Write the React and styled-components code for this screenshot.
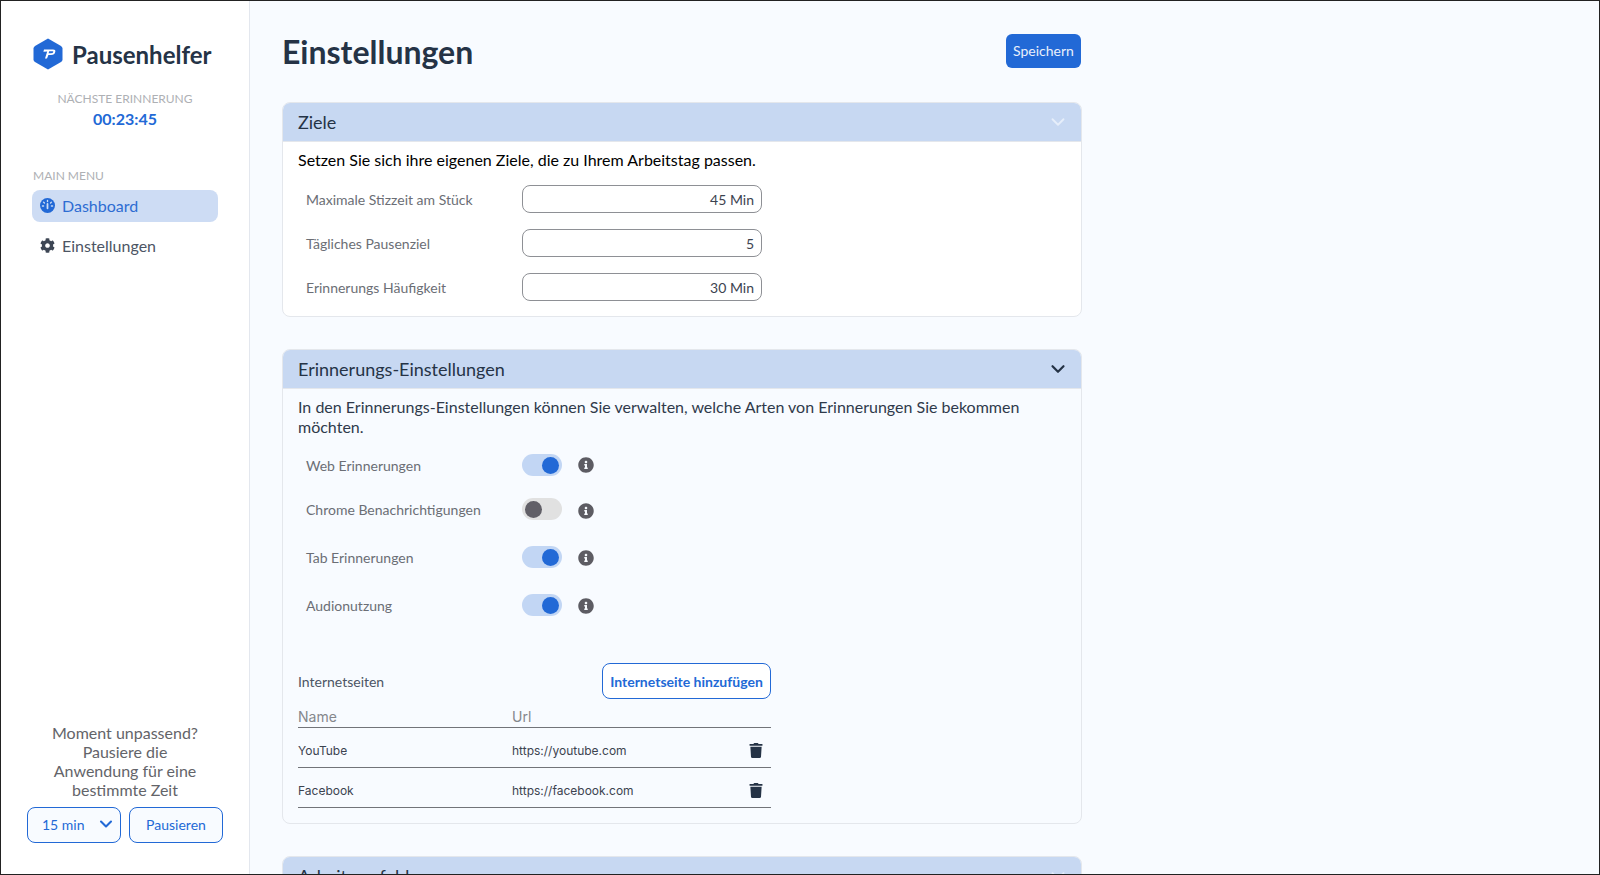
import React from 'react';
import styled, { createGlobalStyle } from 'styled-components';
import { FaCog, FaInfoCircle, FaTrash } from 'react-icons/fa';
import { ChevronDown } from 'lucide-react';

const GlobalStyle = createGlobalStyle`
    * { box-sizing: border-box; }
    html, body { margin: 0; padding: 0; height: 875px; overflow: hidden; }
    body { font-family: "Lato", "Liberation Sans", sans-serif; background: #f8fbff; }
`

const Page = styled.div`
    width: 1600px;
    height: 875px;
    border: 1px solid #222;
    display: flex;
    overflow: hidden;
    background-color: #f8fbff;
`

const Sidebar = styled.aside`
    width: 249px;
    flex-shrink: 0;
    background-color: #fff;
    border-right: 1px solid #e3e7ee;
    display: flex;
    flex-direction: column;
    justify-content: space-between;
    padding: 37px 0 31px;
`

const Logo = styled.div`
    display: flex;
    align-items: center;
    gap: 9px;
    padding-left: 32px;
    color: #253346;
    font-size: 24px;
    font-weight: 700;
`

const LogoMark = styled.svg`
    width: 30px;
    height: 32px;
`

const Reminder = styled.div`
    margin-top: 21px;
    width: 248px;
    text-align: center;
`

const ReminderLabel = styled.div`
    font-size: 12px;
    line-height: 16px;
    color: #aeb0b4;
`

const ReminderTime = styled.div`
    font-size: 16px;
    font-weight: 700;
    line-height: 22px;
    margin-top: 1px;
    color: #2269d6;
`

const MenuTitle = styled.div`
    margin: 38px 0 0 32px;
    font-size: 12px;
    line-height: 16px;
    color: #aeb0b4;
`

const Menu = styled.nav`
    margin: 6px 31px 0;
    display: flex;
    flex-direction: column;
    gap: 8px;
`

const MenuItem = styled.a`
    height: 32px;
    padding: 0 0 1px 8px;
    display: flex;
    align-items: center;
    gap: 7px;
    border-radius: 8px;
    font-size: 16px;
    color: ${p => p.$active ? '#2d6cd2' : '#4c5564'};
    background-color: ${p => p.$active ? '#cddcf4' : 'transparent'};
    svg { width: 15px; height: 15px; color: ${p => p.$active ? '#2269d6' : '#3d4654'}; }
`

const PauseBox = styled.div`
    padding: 0 26px;
    text-align: center;
`

const PauseText = styled.p`
    margin: 0 auto 8px;
    width: 170px;
    font-size: 16px;
    line-height: 19px;
    color: #636469;
`

const PauseControls = styled.div`
    display: flex;
    gap: 8px;
`

const OutlineButton = styled.button`
    width: 94px;
    height: 36px;
    border: 1px solid #2269d6;
    border-radius: 8px;
    background-color: #f8fbff;
    color: #2269d6;
    font-family: inherit;
    font-size: 14px;
    padding: 0 0 2px;
`

const PauseSelect = styled(OutlineButton)`
    display: flex;
    align-items: center;
    justify-content: space-between;
    padding: 0 4px 2px 14px;
    svg { width: 20px; height: 20px; stroke-width: 2.5; }
`

const Main = styled.main`
    flex: 1;
    padding: 33px 0 0 32px;
`

const Content = styled.div`
    width: 800px;
`

const TopBar = styled.header`
    height: 35px;
    margin-bottom: 33px;
    display: flex;
    align-items: center;
    justify-content: space-between;
`

const Title = styled.h1`
    margin: 0;
    font-size: 32px;
    font-weight: 700;
    color: #253346;
`

const SaveButton = styled.button`
    width: 75px;
    height: 34px;
    margin: 0 1px 2px 0;
    border: none;
    border-radius: 6px;
    background-color: #2269d6;
    color: #e9f0fb;
    font-family: inherit;
    font-size: 14px;
    padding: 0;
`

const Card = styled.section`
    background-color: ${p => p.$white ? '#fff' : '#f8fbff'};
    border: 1px solid #e4e7ec;
    border-radius: 8px;
    margin-bottom: 32px;
    overflow: hidden;
`

const CardHeader = styled.div`
    height: 39px;
    padding: 0 12px 0 15px;
    display: flex;
    align-items: center;
    justify-content: space-between;
    background-color: #c7d8f2;
    border-bottom: 1px solid #e4e7ec;
    font-size: 18px;
    color: #253346;
    svg {
        width: 22px;
        height: 22px;
        stroke-width: ${p => p.$pale ? 2 : 2.4};
        color: ${p => p.$pale ? '#e6eefa' : '#253346'};
    }
`

const CardBody = styled.div`
    padding: 8px 15px 15px;
`

const Intro = styled.p`
    margin: 0 0 ${p => p.$gap}px;
    font-size: 16px;
    line-height: 20px;
    color: ${p => p.$dark ? '#000' : '#2f3a4b'};
`

const FieldRow = styled.div`
    height: 28px;
    margin: 0 0 16px 8px;
    display: grid;
    grid-template-columns: 216px 240px;
    align-items: center;
    font-size: 14px;
    color: #6b6e75;
    &:last-child { margin-bottom: 0; }
`

const FieldValue = styled.div`
    height: 28px;
    padding: 0 7px;
    display: flex;
    align-items: center;
    justify-content: flex-end;
    border: 1px solid #8e9095;
    border-radius: 8px;
    background-color: #fff;
    color: #3c4350;
    font-size: 14px;
`

const ToggleRow = styled.div`
    height: 22px;
    margin: 0 0 ${p => p.$gap}px 8px;
    display: grid;
    grid-template-columns: 216px 40px 40px;
    align-items: center;
    font-size: 14px;
    color: #6b6e75;
`

const Toggle = styled.span`
    width: 40px;
    height: 22px;
    padding: 0 3px;
    display: flex;
    align-items: center;
    justify-content: ${p => p.$on ? 'flex-end' : 'flex-start'};
    border-radius: 11px;
    background-color: ${p => p.$on ? '#c2d6f4' : '#e1e1e1'};
    &::after {
        content: '';
        width: 17px;
        height: 17px;
        border-radius: 50%;
        background-color: ${p => p.$on ? '#2269d6' : '#615f67'};
    }
`

const InfoIcon = styled(FaInfoCircle)`
    width: 16px;
    height: 16px;
    margin: ${p => p.$drop}px 0 0 16px;
    color: #5d5c63;
`

const SitesHead = styled.div`
    width: 473px;
    margin-top: 47px;
    display: flex;
    align-items: center;
    justify-content: space-between;
    font-size: 14px;
    color: #4c5564;
`

const AddButton = styled.button`
    width: 169px;
    height: 36px;
    border: 1px solid #2269d6;
    border-radius: 8px;
    background-color: #fff;
    color: #2269d6;
    font-family: inherit;
    font-size: 14px;
    font-weight: 700;
    padding: 0;
`

const SitesTable = styled.div`
    width: 473px;
    margin-top: 7px;
`

const SiteRow = styled.div`
    height: ${p => p.$head ? 22 : 40}px;
    padding: ${p => p.$head ? '0 7px 0 0' : '6px 7px 0 0'};
    display: grid;
    grid-template-columns: 214px 1fr 16px;
    align-items: center;
    border-bottom: 1px solid #727479;
    font-family: "Inter", sans-serif;
    font-size: ${p => p.$head ? 14 : 12}px;
    color: ${p => p.$head ? '#85878c' : '#3c4350'};
    svg { width: 14px; height: 15px; color: #253346; justify-self: center; }
`

const goals = [
    { label: 'Maximale Stizzeit am Stück', value: '45 Min' },
    { label: 'Tägliches Pausenziel', value: '5' },
    { label: 'Erinnerungs Häufigkeit', value: '30 Min' },
]

const toggles = [
    { label: 'Web Erinnerungen', on: true, gap: 22, drop: 0 },
    { label: 'Chrome Benachrichtigungen', on: false, gap: 26, drop: 3 },
    { label: 'Tab Erinnerungen', on: true, gap: 26, drop: 2 },
    { label: 'Audionutzung', on: true, gap: 0, drop: 2 },
]

const sites = [
    { name: 'YouTube', url: 'https://youtube.com' },
    { name: 'Facebook', url: 'https://facebook.com' },
]

function DashboardIcon() {
    return (
        <svg viewBox="0 0 16 16">
            <circle cx="8" cy="8" r="8" fill="currentColor" />
            <g stroke="#cddcf4" strokeWidth="1.5" strokeLinecap="round">
                <path d="M8 2.6v1.2M3.8 4.4l.9.9M12.2 4.4l-.9.9M2.6 8.6h1.2M13.4 8.6h-1.2" />
                <path d="M8 11V6.4" strokeWidth="1.9" />
            </g>
        </svg>
    )
}

export default function App() {
    return (
        <>
            <GlobalStyle />
            <Page>
                <Sidebar>
                    <div>
                        <Logo>
                            <LogoMark viewBox="0 0 30 32">
                                <path d="M15 0.5 L28 8 Q29.5 9 29.5 10.5 L29.5 21.5 Q29.5 23 28 24 L15 31.5 L2 24 Q0.5 23 0.5 21.5 L0.5 10.5 Q0.5 9 2 8 Z" fill="#2269d6" />
                                <path fillRule="evenodd" d="M11 11.5 L20 11.5 Q22.8 11.5 22.3 13.8 Q21.7 17 18 17 L15.4 17 L14 20.5 L12 20.5 L14.2 13.4 L10.4 13.8 Z M16.2 13.3 L15.6 15.3 L17.8 15.3 Q20 15.3 20.3 14 Q20.5 13.3 19.6 13.3 Z" fill="#fff" />
                            </LogoMark>
                            Pausenhelfer
                        </Logo>
                        <Reminder>
                            <ReminderLabel>NÄCHSTE ERINNERUNG</ReminderLabel>
                            <ReminderTime>00:23:45</ReminderTime>
                        </Reminder>
                        <MenuTitle>MAIN MENU</MenuTitle>
                        <Menu>
                            <MenuItem $active><DashboardIcon />Dashboard</MenuItem>
                            <MenuItem><FaCog />Einstellungen</MenuItem>
                        </Menu>
                    </div>
                    <PauseBox>
                        <PauseText>Moment unpassend? Pausiere die Anwendung für eine bestimmte Zeit</PauseText>
                        <PauseControls>
                            <PauseSelect>15 min<ChevronDown /></PauseSelect>
                            <OutlineButton>Pausieren</OutlineButton>
                        </PauseControls>
                    </PauseBox>
                </Sidebar>
                <Main>
                    <Content>
                        <TopBar>
                            <Title>Einstellungen</Title>
                            <SaveButton>Speichern</SaveButton>
                        </TopBar>
                        <Card $white>
                            <CardHeader $pale>Ziele<ChevronDown /></CardHeader>
                            <CardBody>
                                <Intro $dark $gap={15}>Setzen Sie sich ihre eigenen Ziele, die zu Ihrem Arbeitstag passen.</Intro>
                                {goals.map(goal => (
                                    <FieldRow key={goal.label}>
                                        {goal.label}
                                        <FieldValue>{goal.value}</FieldValue>
                                    </FieldRow>
                                ))}
                            </CardBody>
                        </Card>
                        <Card>
                            <CardHeader>Erinnerungs-Einstellungen<ChevronDown /></CardHeader>
                            <CardBody>
                                <Intro $gap={17}>In den Erinnerungs-Einstellungen können Sie verwalten, welche Arten von Erinnerungen Sie bekommen möchten.</Intro>
                                {toggles.map(item => (
                                    <ToggleRow key={item.label} $gap={item.gap}>
                                        {item.label}
                                        <Toggle $on={item.on} />
                                        <InfoIcon $drop={item.drop} />
                                    </ToggleRow>
                                ))}
                                <SitesHead>
                                    Internetseiten
                                    <AddButton>Internetseite hinzufügen</AddButton>
                                </SitesHead>
                                <SitesTable>
                                    <SiteRow $head><span>Name</span><span>Url</span></SiteRow>
                                    {sites.map(site => (
                                        <SiteRow key={site.name}>
                                            <span>{site.name}</span>
                                            <span>{site.url}</span>
                                            <FaTrash />
                                        </SiteRow>
                                    ))}
                                </SitesTable>
                            </CardBody>
                        </Card>
                        <Card>
                            <CardHeader $pale>Arbeitsumfeld<ChevronDown /></CardHeader>
                        </Card>
                    </Content>
                </Main>
            </Page>
        </>
    )
}
